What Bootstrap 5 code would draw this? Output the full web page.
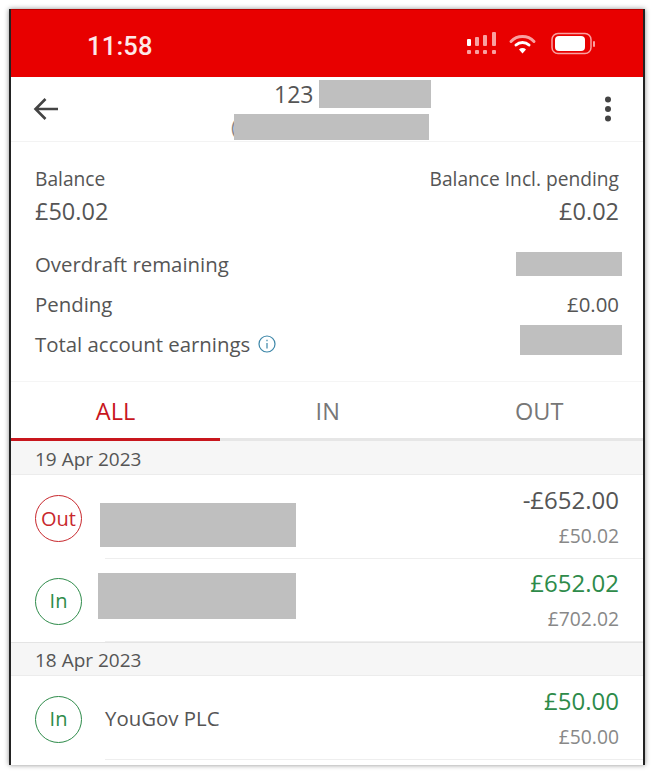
<!DOCTYPE html>
<html lang="en">
<head>
<meta charset="utf-8">
<title>Account</title>
<link href="https://cdn.jsdelivr.net/npm/bootstrap@5.3.0/dist/css/bootstrap.min.css" rel="stylesheet">
<style>
html,body{height:100%;background:#fff;overflow:hidden}
body{font-family:"Open Sans","Liberation Sans",sans-serif;color:#555;padding:9px 8px 8px 9px}
.phone{height:756px;border-left:2px solid #222;border-right:2px solid #222;background:#fff;box-shadow:0 0 5px rgba(0,0,0,.45);overflow:hidden}
.statusbar{height:68px;background:#e80000;border-top:1px solid #b30000;padding:0 46px 0 76px;color:#fff}
.clock{font:500 25.5px/1 Roboto,"Liberation Sans",sans-serif;letter-spacing:.2px;color:#fde8e8;margin-top:7px}
.topbar{height:65px;border-bottom:1px solid #f3f3f3;padding:0 31px 0 22px}
.redact{background:#bfbfbf;display:block;flex:none}
.titles{width:198px;margin-left:175px;margin-top:2px}
.title-line{font-size:23px;line-height:28px;color:#555;height:28px;padding-left:40px}
.r1{width:112px;height:28px;margin-left:6px}
.r2row{margin-top:6px;height:26px;margin-left:-3px}
.paren{font-size:20px;line-height:26px;color:#888;margin-right:-3px}
.r2{width:195px;height:26px;z-index:1}
.summary{padding:23px 24px 0 24px;height:240px;border-bottom:1px solid #f5f5f5}
.lbl{font-size:19.2px;line-height:28px}
.big{font-size:23.5px;line-height:36px}
.line{font-size:20.4px;height:40px}
.overdraft{margin-top:15px}
.s1{width:106px;height:24px;margin-right:-3px;margin-bottom:1px}
.s2{width:102px;height:30px;margin-right:-3px;margin-bottom:8px}
.tabbar{height:59px;border-bottom:3px solid #e6e6e6}
.tabitem{flex:1 1 0;font-size:23.5px;color:#777;text-align:center;line-height:59px;height:59px;padding-left:4px}
.tabitem.on{flex:none;width:209px;color:#c8161d;border-bottom:3px solid #c8161d;padding-left:0}
.band{height:34px;background:#f6f6f6;border-bottom:1px solid #ececec;font-size:19px;line-height:36px;padding-left:24px;color:#555}
.band.next{border-top:1px solid #e4e4e4;line-height:34px}
.txn{height:84px;padding-left:24px}
.txn.short{height:83px}
.circ{width:47px;height:47px;border-radius:50%;border:1.5px solid;font-size:20px;flex:none;margin-top:3px}
.short .circ{margin-top:1px}
.last .circ{margin-top:2px}
.circ.o{color:#c8282d;border-color:#c8282d}
.circ.g{color:#2e8b4a;border-color:#2e8b4a}
.mid{flex:1;align-self:stretch;margin-left:23px;border-bottom:1px solid #eee;font-size:20.4px;color:#555;padding-right:24px}
.amt{font-size:24px;line-height:30px;margin-top:10px}
.short .amt{margin-top:9px}
.bal{font-size:19.3px;line-height:30px;color:#888;margin-top:6px}
.up{color:#2e8b4a}
.who{padding-top:2px}
.r3{width:196px;height:44px;margin:28px 0 0 -5px}
.r4{width:198px;height:46px;margin:14px 0 0 -7px}
</style>
</head>
<body>
<div class="phone">
  <div class="statusbar d-flex align-items-center justify-content-between">
    <div class="clock">11:58</div>
    <svg width="130" height="24" viewBox="0 0 130 24" fill="none" aria-hidden="true">
      <g fill="#f9a0a0"><rect x="0" y="7" width="4" height="7" rx="1" fill="#fff"/><rect x="8" y="5" width="4" height="9" rx="1"/><rect x="16" y="3" width="4" height="11" rx="1"/><rect x="25" y="0" width="4" height="14" rx="1"/><rect x="0" y="18" width="4" height="4" rx="1"/><rect x="8" y="18" width="4" height="4" rx="1"/><rect x="16" y="18" width="4" height="4" rx="1"/><rect x="25" y="18" width="4" height="4" rx="1"/></g>
      <path d="M44 9.500a16 16 0 0 1 23 0" stroke="#f9a0a0" stroke-width="3" stroke-linecap="round"/>
      <path d="M49 13a9.500 9.500 0 0 1 13 0" stroke="#fff" stroke-width="3" stroke-linecap="round"/>
      <path d="M55.500 21.500l-3.500-4a5 5 0 0 1 7 0z" fill="#fff"/>
      <rect x="85" y="1.500" width="39" height="20" rx="6" stroke="#f9a0a0" stroke-width="1.500"/>
      <rect x="88" y="4" width="30" height="15" rx="4" fill="#fff"/>
      <rect x="126" y="9" width="2" height="6" rx="1" fill="#f9a0a0"/>
    </svg>
  </div>
  <div class="topbar d-flex align-items-center justify-content-between">
    <svg width="26" height="24" viewBox="0 0 26 24" fill="none" stroke="#444" stroke-width="2.600" aria-hidden="true"><path d="M25 12H3M12.500 2 2.500 12l10 10"/></svg>
    <div class="titles">
      <div class="title-line d-flex"><span>123</span><span class="redact r1"></span></div>
      <div class="r2row d-flex"><span class="paren">(</span><span class="redact r2"></span></div>
    </div>
    <svg width="8" height="26" viewBox="0 0 8 26" fill="#444" class="ms-auto" aria-hidden="true"><circle cx="4" cy="3.500" r="3"/><circle cx="4" cy="13" r="3"/><circle cx="4" cy="22.500" r="3"/></svg>
  </div>
  <div class="summary">
    <div class="d-flex justify-content-between lbl"><span>Balance</span><span>Balance Incl. pending</span></div>
    <div class="d-flex justify-content-between big"><span>£50.02</span><span>£0.02</span></div>
    <div class="d-flex justify-content-between align-items-center line overdraft"><span>Overdraft remaining</span><span class="redact s1"></span></div>
    <div class="d-flex justify-content-between align-items-center line"><span>Pending</span><span>£0.00</span></div>
    <div class="d-flex justify-content-between align-items-center line">
      <span class="d-flex align-items-center gap-2">Total account earnings
        <svg width="18" height="18" viewBox="0 0 18 18" fill="none" stroke="#3c86a8" stroke-width="1.200" aria-hidden="true"><circle cx="9" cy="9" r="8"/><path d="M9 8v5.500M9 4.800v1.400"/></svg>
      </span>
      <span class="redact s2"></span>
    </div>
  </div>
  <div class="tabbar d-flex">
    <div class="tabitem on">ALL</div>
    <div class="tabitem">IN</div>
    <div class="tabitem">OUT</div>
  </div>
  <div class="band">19 Apr 2023</div>
  <div class="txn d-flex align-items-center">
    <div class="circ o d-flex align-items-center justify-content-center">Out</div>
    <div class="mid d-flex justify-content-between align-items-start">
      <span class="redact r3"></span>
      <div class="text-end"><div class="amt">-£652.00</div><div class="bal">£50.02</div></div>
    </div>
  </div>
  <div class="txn short d-flex align-items-center">
    <div class="circ g d-flex align-items-center justify-content-center">In</div>
    <div class="mid d-flex justify-content-between align-items-start">
      <span class="redact r4"></span>
      <div class="text-end"><div class="amt up">£652.02</div><div class="bal">£702.02</div></div>
    </div>
  </div>
  <div class="band next">18 Apr 2023</div>
  <div class="txn last d-flex align-items-center">
    <div class="circ g d-flex align-items-center justify-content-center">In</div>
    <div class="mid d-flex justify-content-between align-items-start">
      <span class="who align-self-center">YouGov PLC</span>
      <div class="text-end"><div class="amt up">£50.00</div><div class="bal">£50.00</div></div>
    </div>
  </div>
</div>
</body>
</html>
